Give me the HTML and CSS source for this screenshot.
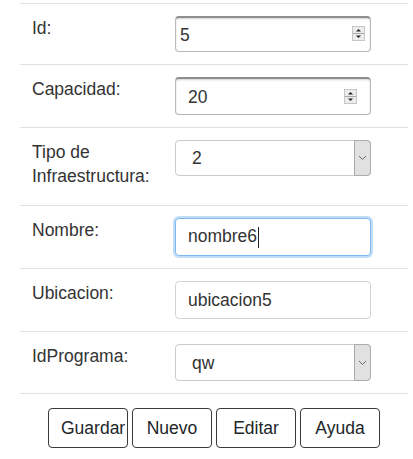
FILE: index.html
```html
<!DOCTYPE html>
<html lang="es">
<head>
<meta charset="utf-8">
<title>Infraestructura</title>
<link rel="stylesheet" href="styles.css">
</head>
<body>
<form class="form-table">
  <div class="row">
    <div class="cell-label"><label for="id">Id:</label></div>
    <div class="cell-control">
      <div class="field field-number field-tight">
        <input id="id" class="control number tight" type="text" value="5">
        <span class="spinner"><svg width="13" height="15" viewBox="0 0 13 15"><rect x=".5" y=".5" width="12" height="14" fill="#ececec" stroke="#c6c6c6"/><line x1="1" y1="7.5" x2="12" y2="7.5" stroke="#a8a8a8"/><path d="M4 5.5h5L6.5 3z" fill="#222"/><path d="M4 9.5h5L6.5 12z" fill="#222"/></svg></span>
      </div>
    </div>
  </div>
  <div class="row">
    <div class="cell-label"><label for="cap">Capacidad:</label></div>
    <div class="cell-control">
      <div class="field field-number">
        <input id="cap" class="control number" type="text" value="20">
        <span class="spinner"><svg width="13" height="15" viewBox="0 0 13 15"><rect x=".5" y=".5" width="12" height="14" fill="#ececec" stroke="#c6c6c6"/><line x1="1" y1="7.5" x2="12" y2="7.5" stroke="#a8a8a8"/><path d="M4 5.5h5L6.5 3z" fill="#222"/><path d="M4 9.5h5L6.5 12z" fill="#222"/></svg></span>
      </div>
    </div>
  </div>
  <div class="row">
    <div class="cell-label"><label for="tipo">Tipo de Infraestructura:</label></div>
    <div class="cell-control">
      <div class="field">
        <select id="tipo" class="control select short"><option>2</option></select>
        <span class="arrow"><svg width="9" height="6" viewBox="0 0 9 6"><path d="M1 1l3.5 3.5L8 1" fill="none" stroke="#666" stroke-width="1"/></svg></span>
      </div>
    </div>
  </div>
  <div class="row">
    <div class="cell-label"><label for="nombre">Nombre:</label></div>
    <div class="cell-control">
      <div id="nombre" class="control text focused" role="textbox">nombre6<span class="caret"></span></div>
    </div>
  </div>
  <div class="row">
    <div class="cell-label"><label for="ubic">Ubicacion:</label></div>
    <div class="cell-control">
      <input id="ubic" class="control text" type="text" value="ubicacion5">
    </div>
  </div>
  <div class="row">
    <div class="cell-label"><label for="prog">IdPrograma:</label></div>
    <div class="cell-control">
      <div class="field">
        <select id="prog" class="control select mid"><option>qw</option></select>
        <span class="arrow"><svg width="9" height="6" viewBox="0 0 9 6"><path d="M1 1l3.5 3.5L8 1" fill="none" stroke="#666" stroke-width="1"/></svg></span>
      </div>
    </div>
  </div>
  <div class="actions">
    <button type="button" class="btn">Guardar</button>
    <button type="button" class="btn">Nuevo</button>
    <button type="button" class="btn">Editar</button>
    <button type="button" class="btn">Ayuda</button>
  </div>
</form>
</body>
</html>
```
FILE: styles.css
```css
html, body {
  margin: 0;
  padding: 0;
  background: #fff;
}
body {
  font-family: "Liberation Sans", Arial, Helvetica, sans-serif;
  font-size: 17.5px;
  color: #333;
}
.form-table {
  width: 388px;
  margin: 3px 0 0 20px;
}
.row {
  display: grid;
  grid-template-columns: 143px 1fr;
  border-top: 1px solid #dee2e6;
}
.cell-label,
.cell-control {
  padding: 12px;
}
.cell-label label {
  display: inline-block;
  line-height: 24px;
  margin-bottom: 5px;
  color: #333;
}
.field {
  position: relative;
  width: 196px;
}
.control {
  box-sizing: border-box;
  display: block;
  width: 196px;
  margin: 0;
  font-family: inherit;
  font-size: 17.5px;
  color: #333;
  background: #fff;
  border-radius: 4px;
  outline: none;
}
.number {
  height: 38px;
  padding: 2px 12px 0;
  border: 1px solid #b8b8b8;
  border-top: 2px solid #8e8e8e;
  box-shadow: inset 0 1px 2px rgba(0, 0, 0, 0.18);
}
.number.tight {
  height: 36px;
  padding-left: 4px;
  padding-right: 4px;
}
.spinner {
  position: absolute;
  top: 50%;
  right: 14px;
  margin-top: -7px;
  width: 13px;
  height: 15px;
  line-height: 0;
}
.field-tight .spinner {
  right: 6px;
  margin-top: -8px;
}
.select {
  -webkit-appearance: none;
  appearance: none;
  height: 36px;
  padding: 0 20px 0 16px;
  border: 1px solid #ccc;
}
.select.mid {
  height: 37px;
}
.arrow {
  position: absolute;
  top: 0;
  right: 0;
  bottom: 0;
  width: 17px;
  box-sizing: border-box;
  background: #e1e1e1;
  border: 1px solid #ababab;
  border-radius: 0 4px 4px 0;
  display: flex;
  align-items: center;
  justify-content: center;
  pointer-events: none;
}
.text {
  height: 38px;
  padding: 0 12px;
  border: 1px solid #ced4da;
}
div.text {
  display: flex;
  align-items: center;
  line-height: 1;
}
.focused {
  border-color: #7fb8ee;
  box-shadow: 0 0 0 2px rgba(120, 180, 240, 0.45);
}
.caret {
  display: inline-block;
  width: 1px;
  height: 21px;
  margin-left: 1px;
  background: #222;
}
.actions {
  border-top: 1px solid #dee2e6;
  display: flex;
  justify-content: center;
  gap: 4px;
  padding-top: 14px;
}
.btn {
  box-sizing: border-box;
  width: 80px;
  height: 40px;
  padding: 0 12px;
  font-family: inherit;
  font-size: 17.5px;
  color: #212529;
  background: #fff;
  border: 1px solid #3a3a3a;
  border-radius: 4px;
  white-space: nowrap;
}
```
